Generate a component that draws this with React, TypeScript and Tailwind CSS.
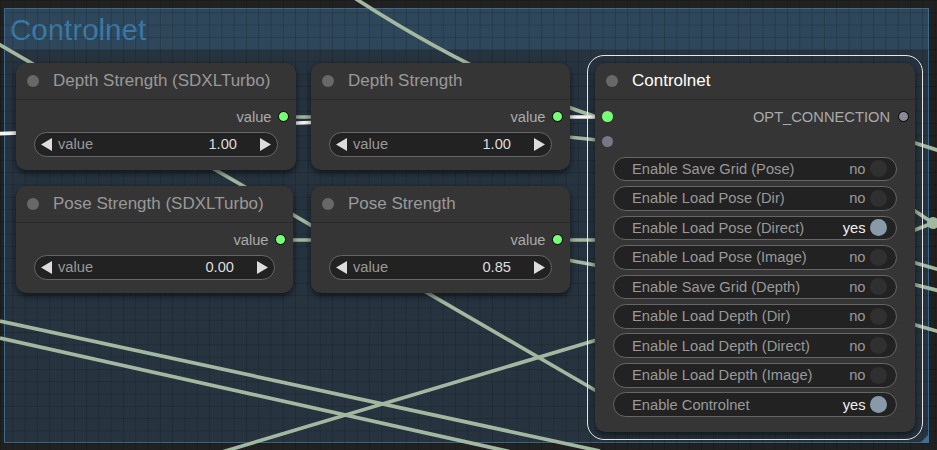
import React from "react";

interface NodeProps {
  pos: string;
  title: string;
  selected?: boolean;
  children: React.ReactNode;
}

const Node = ({ pos, title, selected, children }: NodeProps) => {
  return (
    <div
      className={`absolute rounded-[10px] bg-[#353535] shadow-[0_3px_7px_rgba(0,0,0,0.6)] ${pos}`}
    >
      {selected && (
        <div className="pointer-events-none absolute -inset-[8px] rounded-[17px] border border-[#e6e6e6]" />
      )}
      <div className="flex h-[37px] items-center border-b border-[#2a2a2a]">
        <span className="ml-[11px] h-3 w-3 rounded-full bg-[#686868]" />
        <span
          className={`ml-[14px] text-[17px] ${selected ? "text-white" : "text-[#999]"}`}
        >
          {title}
        </span>
      </div>
      {children}
    </div>
  );
};

const Arrow = ({ dir }: { dir: "left" | "right" }) => (
  <svg width="11" height="13" viewBox="0 0 11 13" className="shrink-0">
    <polygon
      points={dir === "left" ? "11,0 11,13 0,6.5" : "0,0 0,13 11,6.5"}
      fill="#dddddd"
    />
  </svg>
);

const NumberNode = ({ value }: { value: string }) => {
  return (
    <div className="px-[18px] pb-[13.4px] pt-[4.7px]">
      <div className="flex h-[24.6px] items-center justify-end">
        <span className="text-[14.7px] text-[#aaa]">value</span>
        <span className="-mr-[11px] ml-[6.5px] h-[11px] w-[11px] rounded-full border border-black bg-[#77ff77]" />
      </div>
      <div className="mt-[2.7px] flex h-[24.6px] items-center rounded-full border border-[#666] bg-[#222] px-[6px] text-[14.7px]">
        <Arrow dir="left" />
        <span className="ml-[6px] text-[#999]">value</span>
        <span className="ml-auto text-[#ddd]">{value}</span>
        <span className="ml-[23px]">
          <Arrow dir="right" />
        </span>
      </div>
    </div>
  );
};

const toggles: { label: string; on: boolean }[] = [
  { label: "Enable Save Grid (Pose)", on: false },
  { label: "Enable Load Pose (Dir)", on: false },
  { label: "Enable Load Pose (Direct)", on: true },
  { label: "Enable Load Pose (Image)", on: false },
  { label: "Enable Save Grid (Depth)", on: false },
  { label: "Enable Load Depth (Dir)", on: false },
  { label: "Enable Load Depth (Direct)", on: false },
  { label: "Enable Load Depth (Image)", on: false },
  { label: "Enable Controlnet", on: true },
];

const Toggle = ({ label, on }: { label: string; on: boolean }) => (
  <div className="flex h-[24.6px] items-center rounded-full border border-[#666] bg-[#222] pl-[18px] pr-[9px] text-[14.7px]">
    <span className="text-[#999]">{label}</span>
    <span className={`ml-auto ${on ? "text-[#f0f0f0]" : "text-[#999]"}`}>
      {on ? "yes" : "no"}
    </span>
    <span
      className={`ml-[4.5px] h-[17px] w-[17px] rounded-full ${on ? "bg-[#8899aa]" : "bg-[#303030]"}`}
    />
  </div>
);

const Wires = () => (
  <svg
    width="937"
    height="450"
    viewBox="0 0 937 450"
    className="pointer-events-none absolute left-0 top-0"
  >
    <g stroke="#a3b8a0" strokeWidth="3.7" fill="none">
      <path d="M-10 39 L600 393" />
      <path d="M350 -5 Q480 80 600 118" />
      <path d="M283 117 L330 117" />
      <path d="M520 132 L607 141" />
      <path d="M280 240 L330 240" />
      <path d="M557 240 L600 240" />
      <path d="M540 255 L600 266" />
      <path d="M0 321 L600 451" />
      <path d="M0 338 L520 454" />
      <path d="M222 452 L600 339" />
      <path d="M912 142 L940 151" />
      <path d="M912 209 L933 223 L940 224" />
      <path d="M912 231 L933 223" />
      <path d="M912 262 L940 270" />
      <path d="M912 284 L940 291" />
      <path d="M912 324 L940 332" />
    </g>
    <circle cx="933" cy="223" r="6" fill="#a3b8a0" />
    <path
      d="M-10 134 L311 122.5 L570 117 L607 117"
      stroke="#f4f4f4"
      strokeWidth="3.7"
      fill="none"
    />
    <polygon points="929,434 929,443 920,443" fill="#3a6f96" />
  </svg>
);

export default function App() {
  return (
    <div className="relative h-[450px] w-[937px] overflow-hidden bg-[#212121] font-['Liberation_Sans',Arial,sans-serif]">
      <div className="absolute left-[4px] top-[8px] flex h-[435px] w-[925px] flex-col border border-[#3b6b8e] bg-[#273440]">
        <div className="flex h-[41px] items-center bg-[#2e475b] pl-[5px]">
          <span className="text-[29.5px] leading-none text-[#3c7aa8]">
            Controlnet
          </span>
        </div>
      </div>
      <div className="pointer-events-none absolute inset-0 [background-image:linear-gradient(to_right,rgba(0,0,0,0.16)_1px,transparent_1px),linear-gradient(to_bottom,rgba(0,0,0,0.16)_1px,transparent_1px)] [background-size:12.3px_12.3px]" />
      <Wires />

      <Node pos="left-[16px] top-[63px] w-[280px]" title="Depth Strength (SDXLTurbo)">
        <NumberNode value="1.00" />
      </Node>
      <Node pos="left-[311px] top-[63px] w-[259px]" title="Depth Strength">
        <NumberNode value="1.00" />
      </Node>
      <Node pos="left-[16px] top-[186px] w-[277px]" title="Pose Strength (SDXLTurbo)">
        <NumberNode value="0.00" />
      </Node>
      <Node pos="left-[311px] top-[186px] w-[259px]" title="Pose Strength">
        <NumberNode value="0.85" />
      </Node>

      <Node pos="left-[595px] top-[63px] w-[320px]" title="Controlnet" selected>
        <div className="pb-[15.4px] pt-[4.7px]">
          <div className="flex h-[24.6px] items-center pr-[6.5px]">
            <span className="ml-[6.5px] h-[11px] w-[11px] rounded-full bg-[#77ff77]" />
            <span className="ml-auto text-[14.7px] text-[#aaa]">OPT_CONNECTION</span>
            <span className="ml-[7.5px] h-[11px] w-[11px] rounded-full border border-black bg-[#8a8a9a]" />
          </div>
          <div className="flex h-[24.6px] items-center">
            <span className="ml-[6.5px] h-[11px] w-[11px] rounded-full bg-[#77778a]" />
          </div>
          <div className="mt-[2.7px] flex flex-col gap-[4.9px] px-[18px]">
            {toggles.map(({ label, on }, key) => (
              <Toggle key={key} label={label} on={on} />
            ))}
          </div>
        </div>
      </Node>
    </div>
  );
}
